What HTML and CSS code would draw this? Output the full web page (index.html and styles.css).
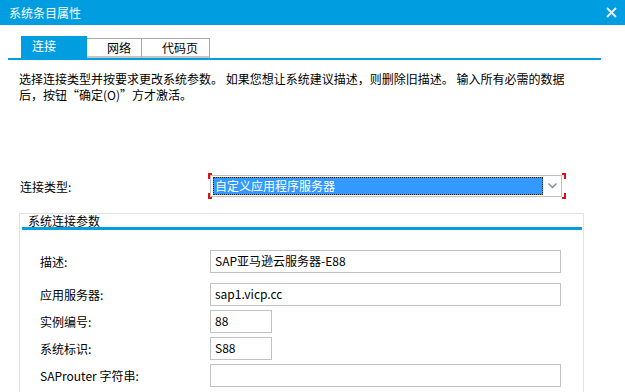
FILE: index.html
```html
<!DOCTYPE html>
<html lang="zh-CN">
<head>
  <meta charset="UTF-8">
  <title>系统条目属性</title>
  <link rel="stylesheet" href="styles.css">
</head>
<body>
  <div class="titlebar">
    <span class="title">系统条目属性</span>
    <svg class="close" width="11" height="11" viewBox="0 0 11 11">
      <path d="M1 1 L10 10 M10 1 L1 10" stroke="#e8e8e8" stroke-width="2"/>
    </svg>
  </div>

  <div class="tabs">
    <div class="tab active">连接</div>
    <div class="tab tab-net">网络</div>
    <div class="tab tab-code">代码页</div>
  </div>

  <p class="intro">选择连接类型并按要求更改系统参数。 如果您想让系统建议描述，则删除旧描述。 输入所有必需的数据<br>后，按钮“确定(O)”方才激活。</p>

  <div class="type-row">
    <label class="type-label">连接类型:</label>
    <div class="select-wrap">
      <span class="corner tl"></span>
      <span class="corner tr"></span>
      <span class="corner bl"></span>
      <span class="corner br"></span>
      <div class="select">
        <div class="select-value">自定义应用程序服务器</div>
        <svg class="chevron" width="9" height="6" viewBox="0 0 9 6">
          <path d="M0.5 0.5 L4.5 4.5 L8.5 0.5" fill="none" stroke="#7a8fa8" stroke-width="1.4"/>
        </svg>
      </div>
    </div>
  </div>

  <div class="group">
    <div class="group-title">系统连接参数</div>
    <div class="fields">
      <div class="field first">
        <label>描述:</label>
        <div class="input wide">SAP亚马逊云服务器-E88</div>
      </div>
      <div class="field">
        <label>应用服务器:</label>
        <div class="input wide">sap1.vicp.cc</div>
      </div>
      <div class="field">
        <label>实例编号:</label>
        <div class="input short">88</div>
      </div>
      <div class="field">
        <label>系统标识:</label>
        <div class="input short">S88</div>
      </div>
      <div class="field">
        <label>SAProuter 字符串:</label>
        <div class="input wide"></div>
      </div>
    </div>
  </div>
</body>
</html>
```

FILE: styles.css
```css
* {
  margin: 0;
  padding: 0;
  box-sizing: border-box;
}

body {
  width: 625px;
  height: 392px;
  overflow: hidden;
  background: #ffffff;
  color: #000000;
  font-family: "Noto Sans CJK SC", "DejaVu Sans", sans-serif;
  font-size: 12px;
  display: flex;
  flex-direction: column;
}

/* Title bar */
.titlebar {
  height: 25px;
  flex-shrink: 0;
  background: #009ee0;
  display: flex;
  align-items: center;
  justify-content: space-between;
  padding: 0 8px 0 9px;
}

.title {
  color: #ffffff;
  font-size: 12px;
  line-height: 14px;
}

.close {
  display: block;
}

/* Tabs */
.tabs {
  margin: 11px 24px 0 8px;
  padding-left: 13px;
  display: flex;
  align-items: flex-end;
  border-bottom: 2px solid #009ee0;
  height: 24px;
  flex-shrink: 0;
}

.tab {
  height: 20px;
  border: 1px solid #a8a8a8;
  border-bottom: 2px solid #c4c4c4;
  border-left: none;
  line-height: 17px;
  color: #000000;
}

.tab.active {
  height: 22px;
  width: 66px;
  background: #009ee0;
  color: #ffffff;
  border: none;
  padding-left: 11px;
  line-height: 20px;
}

.tab-net {
  width: 55px;
  padding-left: 20px;
}

.tab-code {
  width: 68px;
  padding-left: 20px;
}

/* Intro text */
.intro {
  margin: 11px 0 0 19px;
  line-height: 16px;
  white-space: nowrap;
}

/* Connection type */
.type-row {
  margin-top: 70px;
  display: flex;
  align-items: center;
  padding-left: 20px;
}

.type-label {
  width: 188px;
}

.select-wrap {
  position: relative;
  width: 358px;
  height: 26px;
  padding: 2px 4px 2px 2px;
}

.corner {
  position: absolute;
  width: 4px;
  height: 6px;
  border: 0 solid #e01010;
}

.corner.tl { top: 0; left: 0; border-top-width: 2px; border-left-width: 2px; }
.corner.tr { top: 0; right: 0; border-top-width: 2px; border-right-width: 2px; }
.corner.bl { bottom: 0; left: 0; border-bottom-width: 2px; border-left-width: 2px; }
.corner.br { bottom: 0; right: 0; border-bottom-width: 2px; border-right-width: 2px; }

.select {
  height: 22px;
  border: 1px solid #c0c0c0;
  padding: 2px;
  display: flex;
  align-items: center;
}

.select-value {
  width: 330px;
  height: 18px;
  background: #3399ff;
  color: #ffffff;
  border: 1px dotted #c07a1a;
  outline: 1px dotted #202020;
  outline-offset: -1px;
  line-height: 15px;
  padding-left: 1px;
}

.chevron {
  margin-left: 5px;
}

/* Group box */
.group {
  margin: 14px 0 0 19px;
  width: 565px;
  flex: 1;
  min-height: 0;
  overflow: hidden;
  border: 1px solid #e2e2e2;
  border-bottom: none;
}

.group-title {
  margin: 0 1px 0 2px;
  padding-left: 6px;
  line-height: 13px;
  border-bottom: 3px solid #009ee0;
}

.fields {
  padding: 20px 0 0 20px;
  display: flex;
  flex-direction: column;
  gap: 4px;
}

.field {
  display: flex;
  align-items: center;
}

.field.first {
  margin-bottom: 6px;
}

.field label {
  width: 170px;
}

.input {
  height: 23px;
  border: 1px solid #c2c2c2;
  padding-left: 4px;
  line-height: 20px;
  color: #000000;
}

.input.wide {
  width: 351px;
}

.input.short {
  width: 62px;
}
```
